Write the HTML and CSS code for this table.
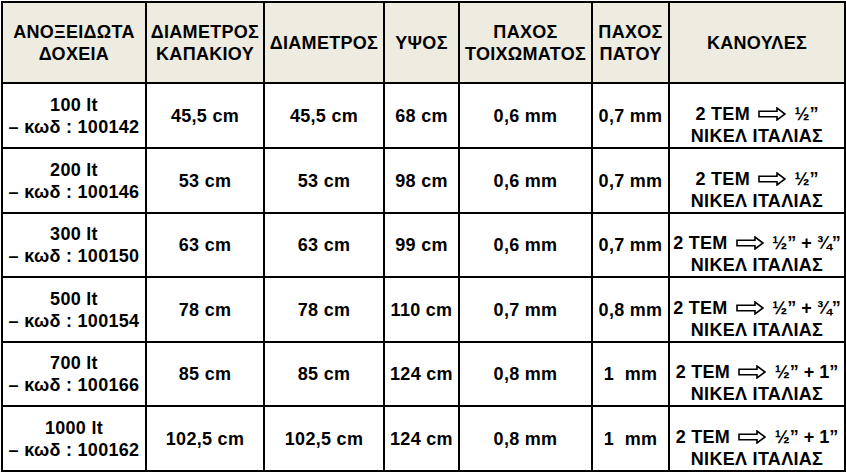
FILE: index.html
```html
<!DOCTYPE html>
<html lang="el">
<head>
<meta charset="utf-8">
<title>Ανοξείδωτα δοχεία</title>
<link rel="stylesheet" href="styles.css">
</head>
<body>
<table class="spec">
  <colgroup>
    <col class="c1"><col class="c2"><col class="c3"><col class="c4"><col class="c5"><col class="c6"><col class="c7">
  </colgroup>
  <thead>
    <tr class="head">
      <th><span class="ln">ΑΝΟΞΕΙΔΩΤΑ</span><span class="ln">ΔΟΧΕΙΑ</span></th>
      <th><span class="ln">ΔΙΑΜΕΤΡΟΣ</span><span class="ln">ΚΑΠΑΚΙΟΥ</span></th>
      <th>ΔΙΑΜΕΤΡΟΣ</th>
      <th>ΥΨΟΣ</th>
      <th><span class="ln">ΠΑΧΟΣ</span><span class="ln">ΤΟΙΧΩΜΑΤΟΣ</span></th>
      <th><span class="ln">ΠΑΧΟΣ</span><span class="ln">ΠΑΤΟΥ</span></th>
      <th>ΚΑΝΟΥΛΕΣ</th>
    </tr>
  </thead>
  <tbody>
    <tr class="r65">
      <td><span class="ln">100 lt</span><span class="ln">– κωδ : 100142</span></td>
      <td>45,5 cm</td><td>45,5 cm</td><td>68 cm</td><td>0,6 mm</td><td>0,7 mm</td>
      <td class="tap"><span class="ln">2 ΤΕΜ <svg class="arrow" viewBox="0 0 28 14" width="28" height="14"><path d="M1 4.2H19V1L27 7L19 13V9.8H1Z"/></svg> <span class="fr">½”</span></span><span class="ln">ΝΙΚΕΛ ΙΤΑΛΙΑΣ</span></td>
    </tr>
    <tr class="r65">
      <td><span class="ln">200 lt</span><span class="ln">– κωδ : 100146</span></td>
      <td>53 cm</td><td>53 cm</td><td>98 cm</td><td>0,6 mm</td><td>0,7 mm</td>
      <td class="tap"><span class="ln">2 ΤΕΜ <svg class="arrow" viewBox="0 0 28 14" width="28" height="14"><path d="M1 4.2H19V1L27 7L19 13V9.8H1Z"/></svg> <span class="fr">½”</span></span><span class="ln">ΝΙΚΕΛ ΙΤΑΛΙΑΣ</span></td>
    </tr>
    <tr class="r64">
      <td><span class="ln">300 lt</span><span class="ln">– κωδ : 100150</span></td>
      <td>63 cm</td><td>63 cm</td><td>99 cm</td><td>0,6 mm</td><td>0,7 mm</td>
      <td class="tap"><span class="ln">2 ΤΕΜ <svg class="arrow" viewBox="0 0 28 14" width="28" height="14"><path d="M1 4.2H19V1L27 7L19 13V9.8H1Z"/></svg> <span class="fr">½” + ¾”</span></span><span class="ln">ΝΙΚΕΛ ΙΤΑΛΙΑΣ</span></td>
    </tr>
    <tr class="r65">
      <td><span class="ln">500 lt</span><span class="ln">– κωδ : 100154</span></td>
      <td>78 cm</td><td>78 cm</td><td>110 cm</td><td>0,7 mm</td><td>0,8 mm</td>
      <td class="tap"><span class="ln">2 ΤΕΜ <svg class="arrow" viewBox="0 0 28 14" width="28" height="14"><path d="M1 4.2H19V1L27 7L19 13V9.8H1Z"/></svg> <span class="fr">½” + ¾”</span></span><span class="ln">ΝΙΚΕΛ ΙΤΑΛΙΑΣ</span></td>
    </tr>
    <tr class="r64">
      <td><span class="ln">700 lt</span><span class="ln">– κωδ : 100166</span></td>
      <td>85 cm</td><td>85 cm</td><td>124 cm</td><td>0,8 mm</td><td>1&nbsp; mm</td>
      <td class="tap"><span class="ln">2 ΤΕΜ <svg class="arrow" viewBox="0 0 28 14" width="28" height="14"><path d="M1 4.2H19V1L27 7L19 13V9.8H1Z"/></svg> <span class="fr">½” + 1”</span></span><span class="ln">ΝΙΚΕΛ ΙΤΑΛΙΑΣ</span></td>
    </tr>
    <tr class="r65">
      <td><span class="ln">1000 lt</span><span class="ln">– κωδ : 100162</span></td>
      <td>102,5 cm</td><td>102,5 cm</td><td>124 cm</td><td>0,8 mm</td><td>1&nbsp; mm</td>
      <td class="tap"><span class="ln">2 ΤΕΜ <svg class="arrow" viewBox="0 0 28 14" width="28" height="14"><path d="M1 4.2H19V1L27 7L19 13V9.8H1Z"/></svg> <span class="fr">½” + 1”</span></span><span class="ln">ΝΙΚΕΛ ΙΤΑΛΙΑΣ</span></td>
    </tr>
  </tbody>
</table>
</body>
</html>
```
FILE: styles.css
```css
html, body {
  margin: 0;
  padding: 0;
  background: #ffffff;
}
body {
  padding: 1px 0 0 1px;
  font-family: "Liberation Sans", Arial, sans-serif;
  font-weight: bold;
  font-size: 18px;
  letter-spacing: 0.3px;
  color: #000;
}
.spec {
  border-collapse: collapse;
  table-layout: fixed;
  width: 843px;
}
.c1 { width: 144px; }
.c2 { width: 118px; }
.c3 { width: 120px; }
.c4 { width: 75px; }
.c5 { width: 133px; }
.c6 { width: 77px; }
.c7 { width: 176px; }
.spec th,
.spec td {
  border: 2px solid #000;
  text-align: center;
  vertical-align: middle;
  padding: 0;
  line-height: 22px;
  white-space: nowrap;
}
.spec th {
  background: #eeece1;
  font-weight: bold;
}
.head { height: 81px; }
.spec tbody tr.r65 { height: 65px; }
.spec tbody tr.r64 { height: 64px; }
.ln { display: block; }
.spec td.tap {
  vertical-align: bottom;
  padding-bottom: 0;
}
.arrow {
  display: inline-block;
  vertical-align: -1px;
  margin: 0 3px;
}
.arrow path {
  fill: #fff;
  stroke: #000;
  stroke-width: 1.6;
  stroke-linejoin: miter;
}
.fr { font-size: 18px; letter-spacing: 0; }
```
